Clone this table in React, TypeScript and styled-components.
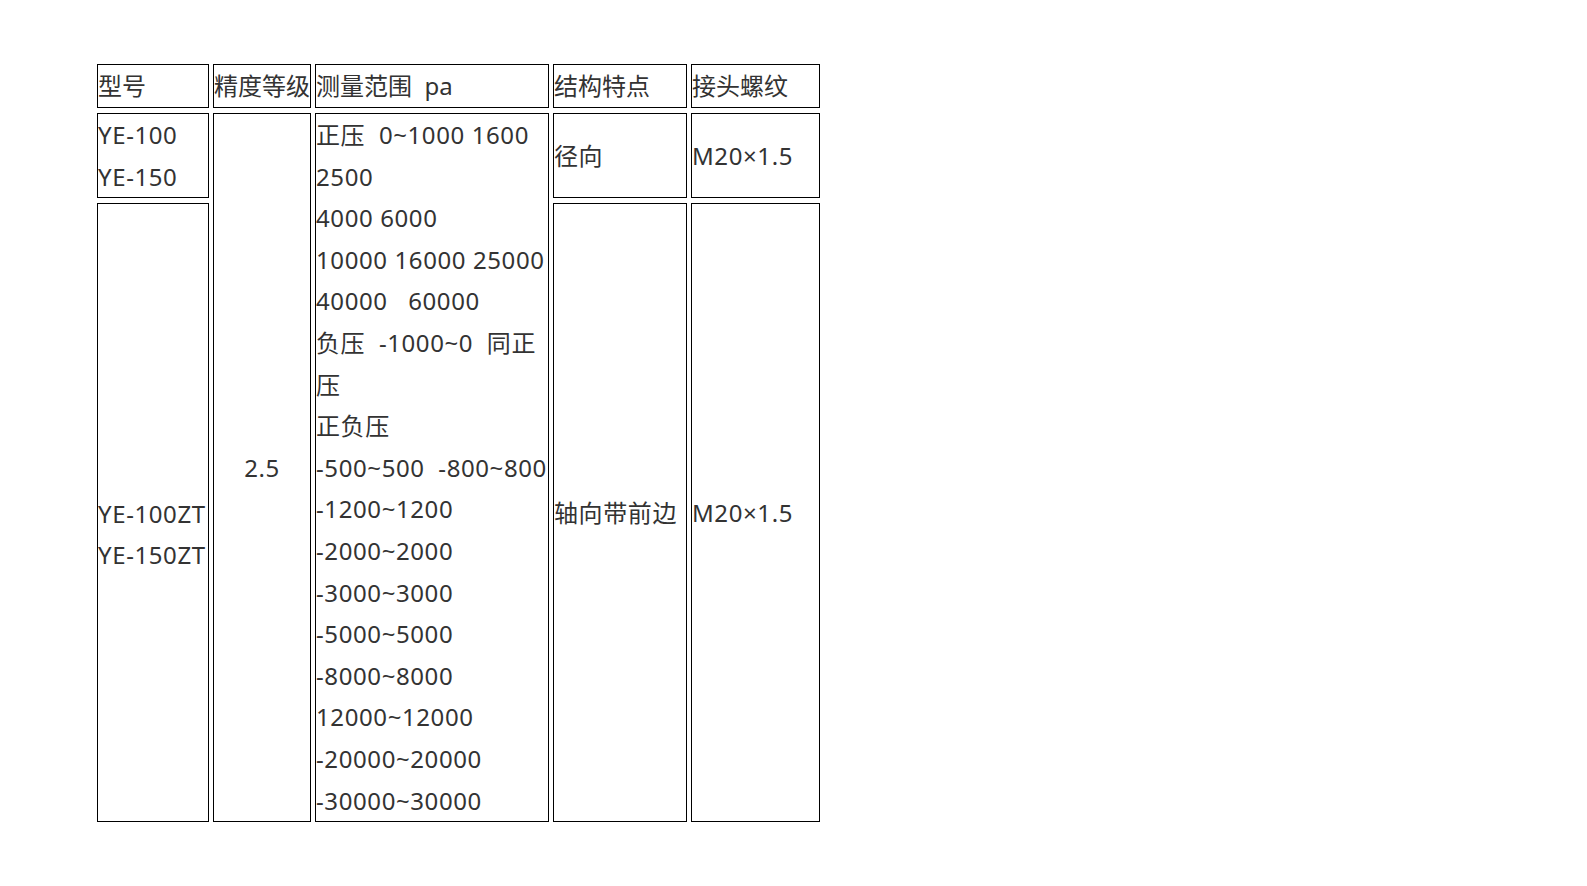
import { FC } from 'react';
import styled, { createGlobalStyle } from 'styled-components';

const GlobalStyle = createGlobalStyle`
  html, body {
    margin: 0;
    padding: 0;
    background: #ffffff;
  }
  body {
    font-family: 'Noto Sans', 'Noto Sans CJK SC', sans-serif;
    color: #333333;
  }
`;

const columns = [112, 98, 234, 134, 129];

const headers = ['型号', '精度等级', '测量范围  pa', '结构特点', '接头螺纹'];

const rangeLines = [
  '正压  0~1000 1600',
  '2500',
  '4000 6000',
  '10000 16000 25000',
  '40000   60000',
  '负压  -1000~0  同正',
  '压',
  '正负压',
  '-500~500  -800~800',
  '-1200~1200',
  '-2000~2000',
  '-3000~3000',
  '-5000~5000',
  '-8000~8000',
  '12000~12000',
  '-20000~20000',
  '-30000~30000',
];

const Lines: FC<{ items: string[] }> = ({ items }) => (
  <>
    {items.map((line, i) => (
      <Line key={i}>{line}</Line>
    ))}
  </>
);

const App: FC = () => (
  <>
    <GlobalStyle />
    <Page>
      <STable>
        <colgroup>
          {columns.map((w, i) => (
            <col key={i} style={{ width: w }} />
          ))}
        </colgroup>
        <tbody>
          <Row $height={44}>
            {headers.map((h) => (
              <Cell key={h} $tight>
                <Line>{h}</Line>
              </Cell>
            ))}
          </Row>
          <Row $height={85}>
            <Cell>
              <Lines items={['YE-100', 'YE-150']} />
            </Cell>
            <Cell rowSpan={2} $center>
              <Line>2.5</Line>
            </Cell>
            <Cell rowSpan={2} $top>
              <Lines items={rangeLines} />
            </Cell>
            <Cell>
              <Line>径向</Line>
            </Cell>
            <Cell>
              <Line>M20×1.5</Line>
            </Cell>
          </Row>
          <tr>
            <Cell $lead>
              <Lines items={['YE-100ZT', 'YE-150ZT']} />
            </Cell>
            <Cell>
              <Line>轴向带前边</Line>
            </Cell>
            <Cell>
              <Line>M20×1.5</Line>
            </Cell>
          </tr>
        </tbody>
      </STable>
    </Page>
  </>
);

export default App;

const Page = styled.div`
  padding: 59px 0 0 93px;
`;

const STable = styled.table`
  border-collapse: separate;
  border-spacing: 4px 5px;
`;

const Row = styled.tr<{ $height: number }>`
  height: ${({ $height }) => $height}px;
`;

const Cell = styled.td<{ $center?: boolean; $top?: boolean; $lead?: boolean; $tight?: boolean }>`
  box-sizing: border-box;
  border: 1px solid #000000;
  padding: ${({ $lead }) => ($lead ? '43px 0 0 0' : '0')};
  vertical-align: ${({ $top }) => ($top ? 'top' : 'middle')};
  text-align: ${({ $center }) => ($center ? 'center' : 'left')};
  font-size: 24px;
  line-height: 41.6px;
  letter-spacing: ${({ $tight }) => ($tight ? '0' : '0.6px')};
  color: #333333;
`;

const Line = styled.div`
  white-space: pre;
  height: 41.6px;
`;
